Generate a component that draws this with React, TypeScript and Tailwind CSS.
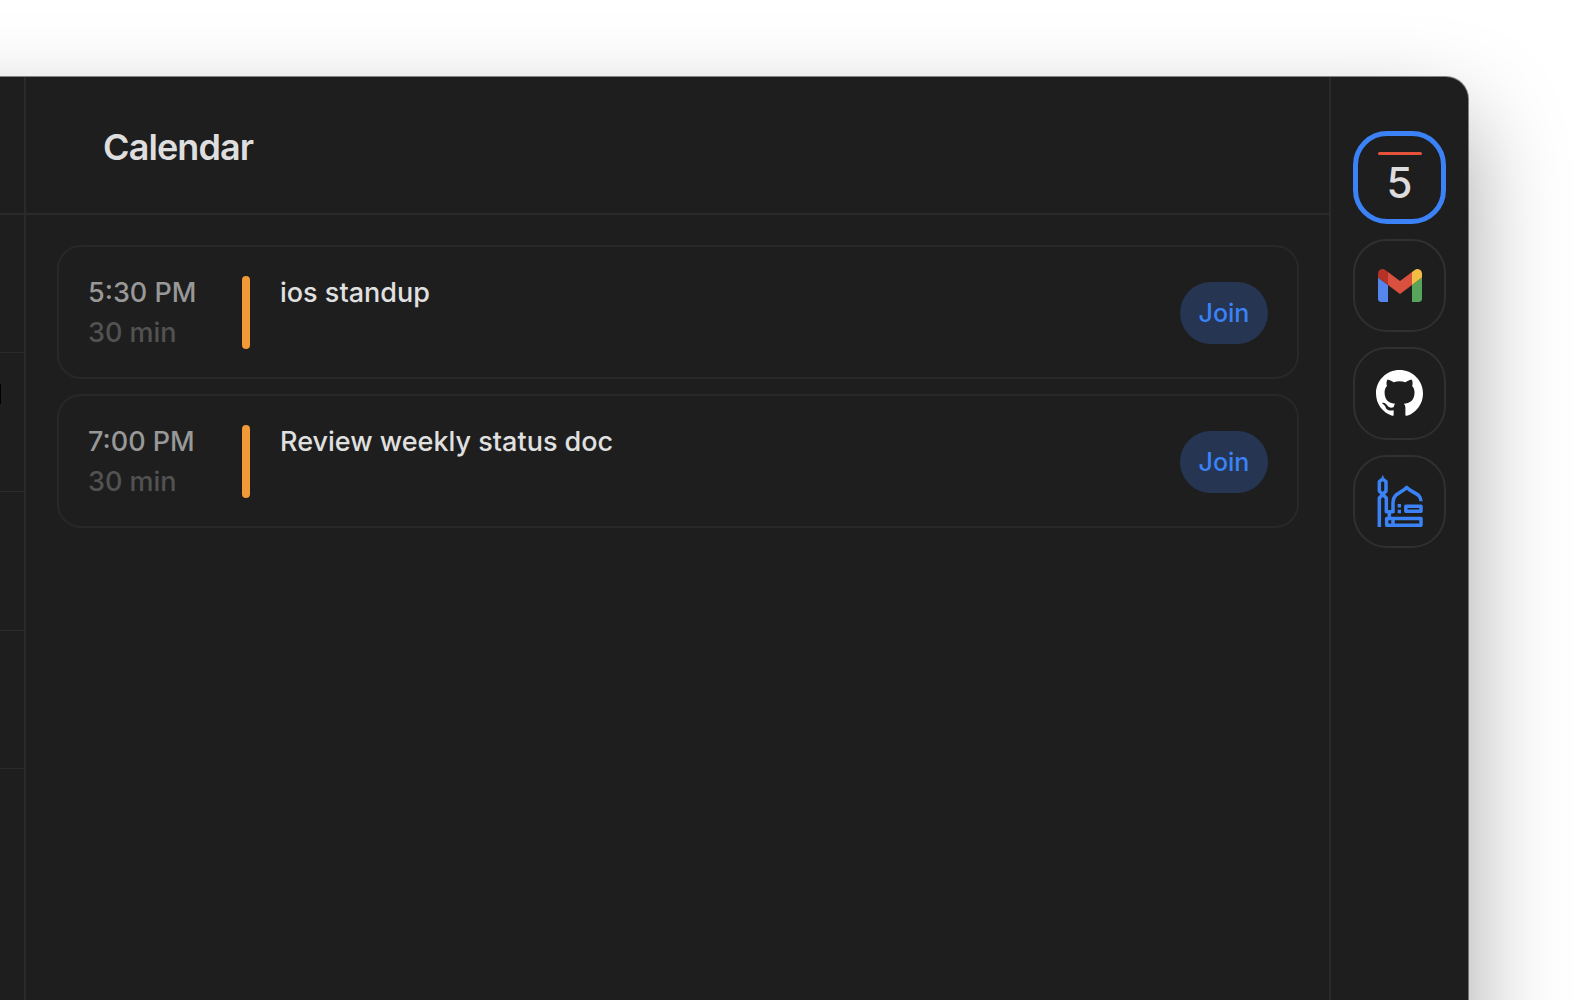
import type { ReactNode } from "react";

type CalendarEvent = { time: string; duration: string; title: string };

const events: CalendarEvent[] = [
  { time: "5:30 PM", duration: "30 min", title: "ios standup" },
  { time: "7:00 PM", duration: "30 min", title: "Review weekly status doc" },
];

function GmailLogo() {
  return (
    <svg viewBox="52 42 88 66" className="h-[33px] w-11" aria-hidden="true">
      <path fill="#5486ee" d="M58 108h14V74L52 59v43c0 3.32 2.69 6 6 6" />
      <path fill="#56a55a" d="M120 108h14c3.32 0 6-2.69 6-6V59l-20 15" />
      <path fill="#f2bd42" d="M120 48v26l20-15v-8c0-7.42-8.47-11.65-14.4-7.2" />
      <path fill="#d9503f" d="M72 74V48l24 18 24-18v26L96 92" />
      <path fill="#b73226" d="M52 51v8l20 15V48l-5.6-4.2c-5.94-4.45-14.4-.22-14.4 7.2" />
    </svg>
  );
}

function GithubLogo() {
  return (
    <svg viewBox="0 0 16 16" className="size-[47px]" fill="#fff" aria-hidden="true">
      <path d="M8 0C3.58 0 0 3.58 0 8c0 3.54 2.29 6.53 5.47 7.59.4.07.55-.17.55-.38 0-.19-.01-.82-.01-1.49-2.01.37-2.53-.49-2.69-.94-.09-.23-.48-.94-.82-1.13-.28-.15-.68-.52-.01-.53.63-.01 1.08.58 1.23.82.72 1.21 1.87.87 2.33.66.07-.52.28-.87.51-1.07-1.78-.2-3.64-.89-3.64-3.95 0-.87.31-1.59.82-2.15-.08-.2-.36-1.02.08-2.12 0 0 .67-.21 2.2.82.64-.18 1.32-.27 2-.27s1.36.09 2 .27c1.53-1.04 2.2-.82 2.2-.82.44 1.1.16 1.92.08 2.12.51.56.82 1.27.82 2.15 0 3.07-1.87 3.75-3.65 3.95.29.25.54.73.54 1.48 0 1.07-.01 1.93-.01 2.2 0 .21.15.46.55.38A8.01 8.01 0 0 0 16 8c0-4.42-3.58-8-8-8z" />
    </svg>
  );
}

function MosqueLogo() {
  return (
    <svg
      viewBox="51 44 138 159"
      className="h-[53px] w-[46px]"
      fill="none"
      stroke="#3b82f6"
      strokeWidth="10.5"
      strokeLinejoin="round"
      aria-hidden="true"
    >
      <path d="M68 46v10" strokeWidth="5" />
      <path d="M58 200V113L78 92V64L68 56L58 64V92L79 113V154H99" />
      <path d="M88 154V174" />
      <path d="M99 158V126C99 98 126 98 140 81C154 98 183 98 183 123" />
      <path d="M137.5 138H183V153H137.500Z" />
      <path d="M80 174.500V195H183V174.500ZM99 174V195" />
      <path d="M113 136.500h10M113 153.500h10" />
    </svg>
  );
}

function CalendarLogo() {
  return (
    <span className="flex flex-col items-center gap-1 pt-1">
      <span className="h-[3px] w-11 rounded-full bg-[#e5533f]" />
      <span className="text-[42px] leading-[48px] font-medium text-[#dedcdd]">5</span>
    </span>
  );
}

function DockButton({ label, active = false, children }: { label: string; active?: boolean; children: ReactNode }) {
  return (
    <button
      type="button"
      aria-label={label}
      className={
        active
          ? "flex size-[93px] items-center justify-center rounded-[34px] border-[5px] border-[#3b82f6]"
          : "flex size-[93px] items-center justify-center rounded-[34px] border-2 border-[#303030]"
      }
    >
      {children}
    </button>
  );
}

function EventCard({ event }: { event: CalendarEvent }) {
  return (
    <li className="flex items-start rounded-[24px] border-2 border-[#282828] px-[29px] pt-[29px] pb-7 text-[27px] leading-10 font-medium">
      <div className="-my-1 w-[154px] shrink-0 pt-px">
        <p className="text-[#989898]">{event.time}</p>
        <p className="text-[#525252]">{event.duration}</p>
      </div>
      <span className="h-[73px] w-2 shrink-0 rounded-full bg-[#f19a37]" />
      <p className="-mt-[3px] min-w-0 flex-1 pl-[30px] text-[#e0e0e0]">{event.title}</p>
      <button
        type="button"
        className="h-[62px] w-[88px] shrink-0 self-center rounded-full bg-[#253552] text-[25px] font-medium text-[#3b82f6]"
      >
        Join
      </button>
    </li>
  );
}

export default function App() {
  return (
    <div className="flex h-screen overflow-hidden bg-white pt-[77px] pr-28 font-['Inter',sans-serif]">
      <div className="-mb-36 -ml-36 flex flex-1 overflow-hidden rounded-tr-[22px] bg-[#1e1e1e] shadow-[0_0_0_1px_rgba(0,0,0,0.45),0_42px_96px_rgba(0,0,0,0.36)]">
        <aside className="w-[170px] shrink-0 border-r-2 border-[#2a2a2a]">
          <div className="h-[138px] border-b-2 border-[#2a2a2a]" />
          <div className="h-[138px] border-b border-[#2a2a2a]" />
          <div className="flex h-[139px] items-center border-b border-[#2a2a2a] pb-14 pl-36">
            <span className="h-5 w-px bg-black" />
          </div>
          <div className="h-[139px] border-b border-[#2a2a2a]" />
          <div className="h-[138px] border-b border-[#2a2a2a]" />
        </aside>
        <main className="min-w-0 flex-1">
          <header className="flex h-[138px] items-center border-b-2 border-[#2a2a2a] pt-1 pl-[77px]">
            <h1 className="text-[36px] leading-[44px] font-semibold tracking-tight text-[#dedede]">Calendar</h1>
          </header>
          <ul className="flex flex-col gap-[15px] pt-[30px] pr-[30px] pl-[31px]">
            {events.map((event) => (
              <EventCard key={event.title} event={event} />
            ))}
          </ul>
        </main>
        <nav className="flex w-[139px] shrink-0 flex-col items-center gap-[15px] border-l-2 border-[#2a2a2a] pt-[54px]">
          <DockButton label="Calendar" active>
            <CalendarLogo />
          </DockButton>
          <DockButton label="Gmail">
            <GmailLogo />
          </DockButton>
          <DockButton label="GitHub">
            <GithubLogo />
          </DockButton>
          <DockButton label="Mosque">
            <MosqueLogo />
          </DockButton>
        </nav>
      </div>
    </div>
  );
}
